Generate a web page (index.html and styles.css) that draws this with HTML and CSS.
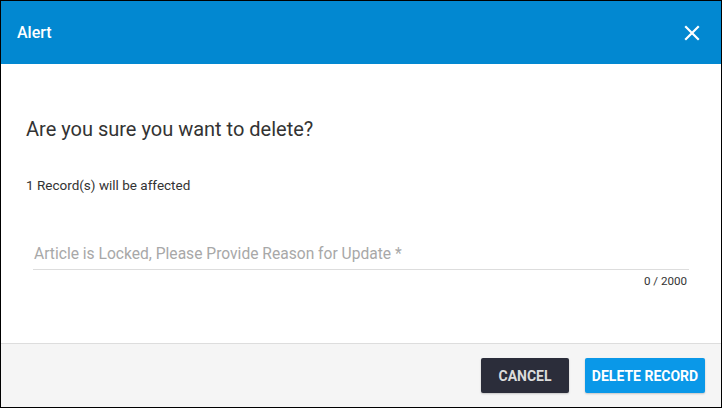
FILE: index.html
```html
<!DOCTYPE html>
<html>
<head>
<meta charset="utf-8">
<link rel="stylesheet" href="styles.css">
</head>
<body>
<div class="dialog">
  <div class="header">
    <span class="title">Alert</span>
    <svg class="close" width="16" height="16" viewBox="0 0 16 16"><path d="M2 2 L14 14 M14 2 L2 14" stroke="#fff" stroke-width="2.2" stroke-linecap="square"/></svg>
  </div>
  <div class="body">
    <div class="question">Are you sure you want to delete?</div>
    <div class="affected">1 Record(s) will be affected</div>
    <div class="field">
      <div class="input">Article is Locked, Please Provide Reason for Update *</div>
      <div class="counter">0 / 2000</div>
    </div>
  </div>
  <div class="footer">
    <button class="btn cancel">CANCEL</button>
    <button class="btn delete">DELETE RECORD</button>
  </div>
</div>
</body>
</html>
```
FILE: styles.css
```css
* { box-sizing: border-box; }
html, body { margin: 0; padding: 0; }
body { font-family: Roboto, "Liberation Sans", sans-serif; background: #fff; }
.dialog {
  width: 722px; height: 408px;
  border: 1px solid #000;
  display: flex; flex-direction: column;
  background: #fff;
}
.header {
  height: 63px; background: #0288d1;
  display: flex; align-items: center; justify-content: space-between;
  padding: 0 21px 0 16px;
}
.title { color: #fff; font-size: 16px; font-weight: 500; }
.close { display: block; }
.body { flex: 1; padding: 53px 32px 0 25px; }
.question { font-size: 20px; color: #333; line-height: 24px; }
.affected { font-size: 13.5px; color: #333; margin-top: 36px; line-height: 16px; }
.field { margin-top: 51px; padding-left: 7px; }
.input {
  font-size: 15.6px; color: #a8a8a8; line-height: 20px;
  padding: 0 0 5px 1px;
  border-bottom: 1px solid #ddd;
}
.counter { text-align: right; font-size: 11.6px; color: #333; margin-top: 4px; line-height: 14px; padding-right: 2px; }
.footer {
  height: 64px; background: #f5f5f5; border-top: 1px solid #ddd;
  display: flex; align-items: center; justify-content: flex-end;
  padding: 0 16px 0 0; gap: 16px;
}
.btn {
  height: 35px; border: none; border-radius: 2px;
  font-family: Roboto, "Liberation Sans", sans-serif;
  font-size: 14px; font-weight: 700; padding: 0;
  white-space: nowrap;
  box-shadow: 0 1px 2px rgba(0,0,0,0.2);
}
.cancel { background: #2b2d3a; color: #dcdcdc; width: 88px; }
.delete { background: #0a98e8; color: #fff; width: 120px; }
```
